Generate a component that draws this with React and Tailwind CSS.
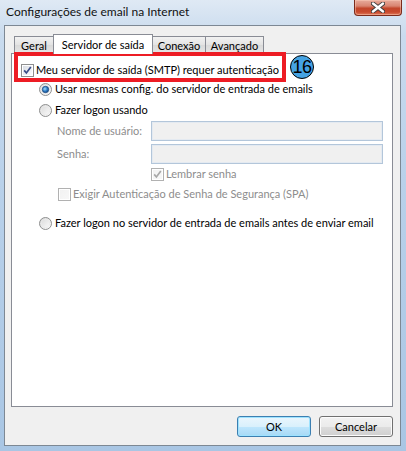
import React from "react";

function CloseButton() {
  return (
    <div className="relative mr-[4px] mt-0 h-[16px] w-[48px] rounded-b-[4px] border border-t-0 border-[#7b2b1c] bg-[linear-gradient(to_bottom,#e7ab9c_0%,#d98571_40%,#c2462b_55%,#c94a2e_80%,#de7a5b_100%)] shadow-[inset_0_0_0_1px_rgba(255,210,190,0.45)] flex items-center justify-center">
      <svg width="14" height="11" viewBox="0 0 14 11">
        <path d="M2 1.5 L12 9.5 M12 1.5 L2 9.5" stroke="#3d3d3d" strokeWidth="4.2" strokeLinecap="round" />
        <path d="M2 1.5 L12 9.5 M12 1.5 L2 9.5" stroke="#ffffff" strokeWidth="2.4" strokeLinecap="round" />
      </svg>
    </div>
  );
}

function CheckBox({ checked, disabled }) {
  const border = disabled ? "#b1b1b1" : "#8e8f8f";
  const check = disabled ? "#a8a8a8" : "#3a4d87";
  const id = disabled ? "cbd" : "cbe";
  return (
    <svg width="13" height="13" viewBox="0 0 13 13" className="shrink-0">
      <defs>
        <linearGradient id={id} x1="0" y1="0" x2="1" y2="1">
          <stop offset="0" stopColor={disabled ? "#f2f2f2" : "#d9dde4"} />
          <stop offset="1" stopColor={disabled ? "#f7f7f7" : "#fbfcfd"} />
        </linearGradient>
      </defs>
      <rect x="0.5" y="0.5" width="12" height="12" fill="#ffffff" stroke={border} />
      <rect x="2" y="2" width="9" height="9" fill={`url(#${id})`} />
      {checked && (
        <path d="M3.2 6.4 L5.4 9 L9.8 3" fill="none" stroke={check} strokeWidth="1.7" />
      )}
    </svg>
  );
}

function Radio({ checked }) {
  return (
    <svg width="13" height="13" viewBox="0 0 13 13" className="shrink-0">
      <defs>
        <linearGradient id="rg" x1="0" y1="0" x2="1" y2="1">
          <stop offset="0" stopColor="#d6d6d6" />
          <stop offset="1" stopColor="#ffffff" />
        </linearGradient>
        <radialGradient id="rdot" cx="0.4" cy="0.4" r="0.6">
          <stop offset="0" stopColor="#a9e0fa" />
          <stop offset="0.6" stopColor="#2f7fc8" />
          <stop offset="1" stopColor="#1a4d8a" />
        </radialGradient>
      </defs>
      <circle cx="6.5" cy="6.5" r="6" fill="url(#rg)" stroke="#8e8f8f" />
      <circle cx="6.5" cy="6.5" r="4.2" fill="none" stroke="#eaeaea" strokeWidth="0.8" />
      {checked && <circle cx="6.5" cy="6.5" r="3.2" fill="url(#rdot)" stroke="#1f4f86" strokeWidth="0.8" />}
    </svg>
  );
}

function Tab({ label, w, selected }) {
  if (selected) {
    return (
      <div
        className={`relative z-10 mb-[-1px] h-[20px] ${w} -ml-px border border-b-0 border-[#898c95] bg-white flex items-start justify-center pt-[2px] leading-[15px]`}
      >
        {label}
      </div>
    );
  }
  return (
    <div
      className={`h-[17px] ${w} -ml-px border border-b-0 border-[#898c95] bg-[linear-gradient(to_bottom,#f2f2f2,#e3e3e3_50%,#d9d9d9_51%,#e6e6e6)] flex items-start justify-center pt-[2px] leading-[14px]`}
    >
      {label}
    </div>
  );
}

function Field({ label, mt }) {
  return (
    <div className={`flex items-center h-[20px] ${mt} ml-[36px]`}>
      <div className="w-[94px] text-[#8d8d8d]">{label}</div>
      <div className="h-[20px] w-[232px] border border-[#b3c6da] bg-[#f0f0f0] shadow-[inset_0_0_0_1px_#e4eaf1]" />
    </div>
  );
}

export default function App() {
  return (
    <div className="relative w-[406px] h-[451px] overflow-hidden bg-[linear-gradient(to_bottom,#dfe9f4_0%,#c9dbee_8%,#b9d1ea_40%,#a9c6e4_100%)] font-['Lato',sans-serif] text-[11px] text-black">
      <div className="flex items-start h-[25px]">
        <div className="pl-[6px] pt-[4px] leading-[16px] text-[12px] text-[#111]">Configurações de email na Internet</div>
        <div className="ml-auto">
          <CloseButton />
        </div>
      </div>

      <div className="ml-[4px] w-[397px] h-[421px] border border-[#7d8894] bg-[#f0f0f0] flex flex-col">
        <div className="mt-[8px] ml-[10px] h-[19px] flex items-end">
          <Tab label="Geral" w="w-[40px]" />
          <Tab label="Servidor de saída" w="w-[100px]" selected />
          <Tab label="Conexão" w="w-[54px]" />
          <Tab label="Avançado" w="w-[59px]" />
        </div>
        <div className="ml-[6px] w-[382px] h-[354px] border border-[#898c95] bg-white flex flex-col pl-[9px] pt-[7px]">
          <div className="flex items-center h-[18px] gap-[2px]">
            <CheckBox checked />
            <span>Meu servidor de saída (SMTP) requer autenticação</span>
          </div>
          <div className="flex items-center h-[18px] gap-[3px] ml-[18px] mt-[1px]">
            <Radio checked />
            <span>Usar mesmas config. do servidor de entrada de emails</span>
          </div>
          <div className="flex items-center h-[18px] gap-[3px] ml-[18px] mt-[3px]">
            <Radio />
            <span>Fazer logon usando</span>
          </div>
          <Field label="Nome de usuário:" mt="mt-[2px]" />
          <Field label="Senha:" mt="mt-[3px]" />
          <div className="flex items-center h-[18px] gap-[2px] ml-[130px] mt-[1px]">
            <CheckBox checked disabled />
            <span className="text-[#8d8d8d]">Lembrar senha</span>
          </div>
          <div className="flex items-center h-[18px] gap-[2px] ml-[37px] mt-[2px]">
            <CheckBox disabled />
            <span className="text-[#8d8d8d]">Exigir Autenticação de Senha de Segurança (SPA)</span>
          </div>
          <div className="flex items-center h-[18px] gap-[3px] ml-[18px] mt-[11px]">
            <Radio />
            <span className="whitespace-nowrap">Fazer logon no servidor de entrada de emails antes de enviar email</span>
          </div>
        </div>
        <div className="mt-[9px] flex justify-end gap-[8px] pr-[7px]">
          <button className="h-[21px] w-[74px] rounded-[3px] border border-[#3c7fb1] bg-[linear-gradient(to_bottom,#eaf6fd,#d9f0fc_50%,#bee6fd_51%,#a7d9f5)] shadow-[inset_0_0_0_1px_#9ee3ff] text-[11px] leading-[18px]">
            OK
          </button>
          <button className="h-[21px] w-[74px] rounded-[3px] border border-[#707070] bg-[linear-gradient(to_bottom,#f2f2f2,#ebebeb_50%,#dddddd_51%,#cfcfcf)] shadow-[inset_0_0_0_1px_#fcfcfc] text-[11px] leading-[18px]">
            Cancelar
          </button>
        </div>
      </div>

      {/* annotation overlay */}
      <div className="absolute left-[14px] top-[52px] w-[272px] h-[30px] border-[4px] border-[#ed1c24]" />
      <div className="absolute left-[290px] top-[55px] w-[24px] h-[24px] rounded-full bg-[#45a3e3] border-[1.5px] border-black flex items-center justify-center text-[18px] leading-none text-black tracking-[-0.5px] font-['Liberation_Sans',sans-serif]">
        16
      </div>
    </div>
  );
}
